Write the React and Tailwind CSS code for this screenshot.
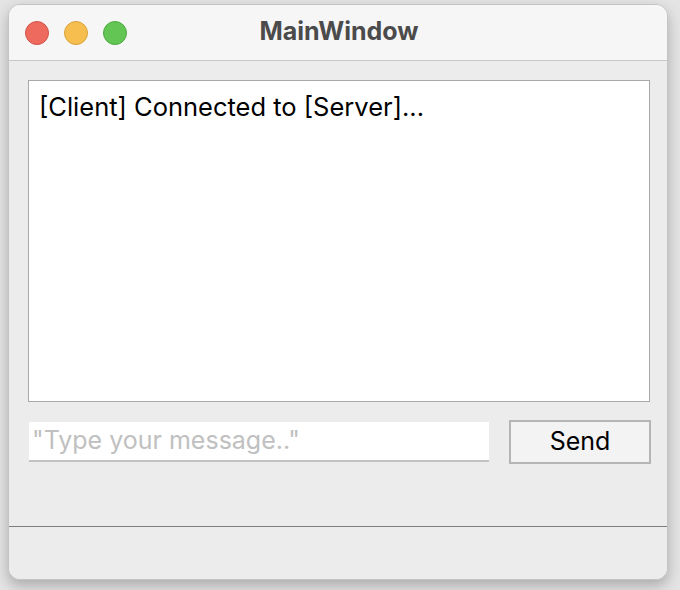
import React from 'react';

const font = { fontFamily: '"Inter", "Liberation Sans", sans-serif' };

const TrafficLight = ({ fill, stroke }) => (
    <span className={`block h-[24px] w-[24px] rounded-full border ${fill} ${stroke}`} />
);

const App = () => {
    return (
        <div className="h-[590px] w-[680px] bg-[#e4e4e4] pl-[8px] pt-[4px]" style={font}>
            {/* Window */}
            <div className="flex h-[576px] w-[660px] flex-col overflow-hidden rounded-[12px] border border-[#c4c4c4] bg-[#ececec] shadow-[0_6px_14px_rgba(0,0,0,0.25)]">
                {/* Title bar */}
                <div className="relative flex h-[56px] shrink-0 items-center border-b border-[#c8c8c8] bg-[#f6f6f6] px-[16px]">
                    <div className="flex gap-[15px]">
                        <TrafficLight fill="bg-[#ee6a5f]" stroke="border-[#d25246]" />
                        <TrafficLight fill="bg-[#f5be4f]" stroke="border-[#d9a23a]" />
                        <TrafficLight fill="bg-[#62c554]" stroke="border-[#4ca93f]" />
                    </div>
                    <div className="absolute inset-0 flex items-center justify-center pb-[1px] pl-[2px] text-[25px] font-bold text-[#4b4b4b]">
                        MainWindow
                    </div>
                </div>

                {/* Content */}
                <div className="flex flex-1 flex-col pl-[19px] pr-[17px] pt-[19px]">
                    <div className="h-[322px] border border-[#a9a9a9] bg-white px-[10px] pt-[9px] text-[25.5px] leading-[34px] text-black">
                        [Client] Connected to [Server]...
                    </div>

                    <div className="mt-[18px] flex items-center justify-between">
                        <div className="ml-[1px] flex h-[40px] w-[460px] items-center border-b-2 border-[#c2c2c2] bg-white pl-[3px] text-[25px] text-[#c0c0c0]">
                            "Type your message.."
                        </div>
                        <button className="mr-[-1px] flex h-[44px] w-[142px] items-center justify-center border-2 border-[#b5b5b5] bg-[#f3f3f3] text-[25px] text-black">
                            Send
                        </button>
                    </div>
                </div>

                {/* Status bar */}
                <div className="h-[53px] shrink-0 border-t border-[#7d7d7d] bg-[#ececec]" />
            </div>
        </div>
    );
};

export default App;
